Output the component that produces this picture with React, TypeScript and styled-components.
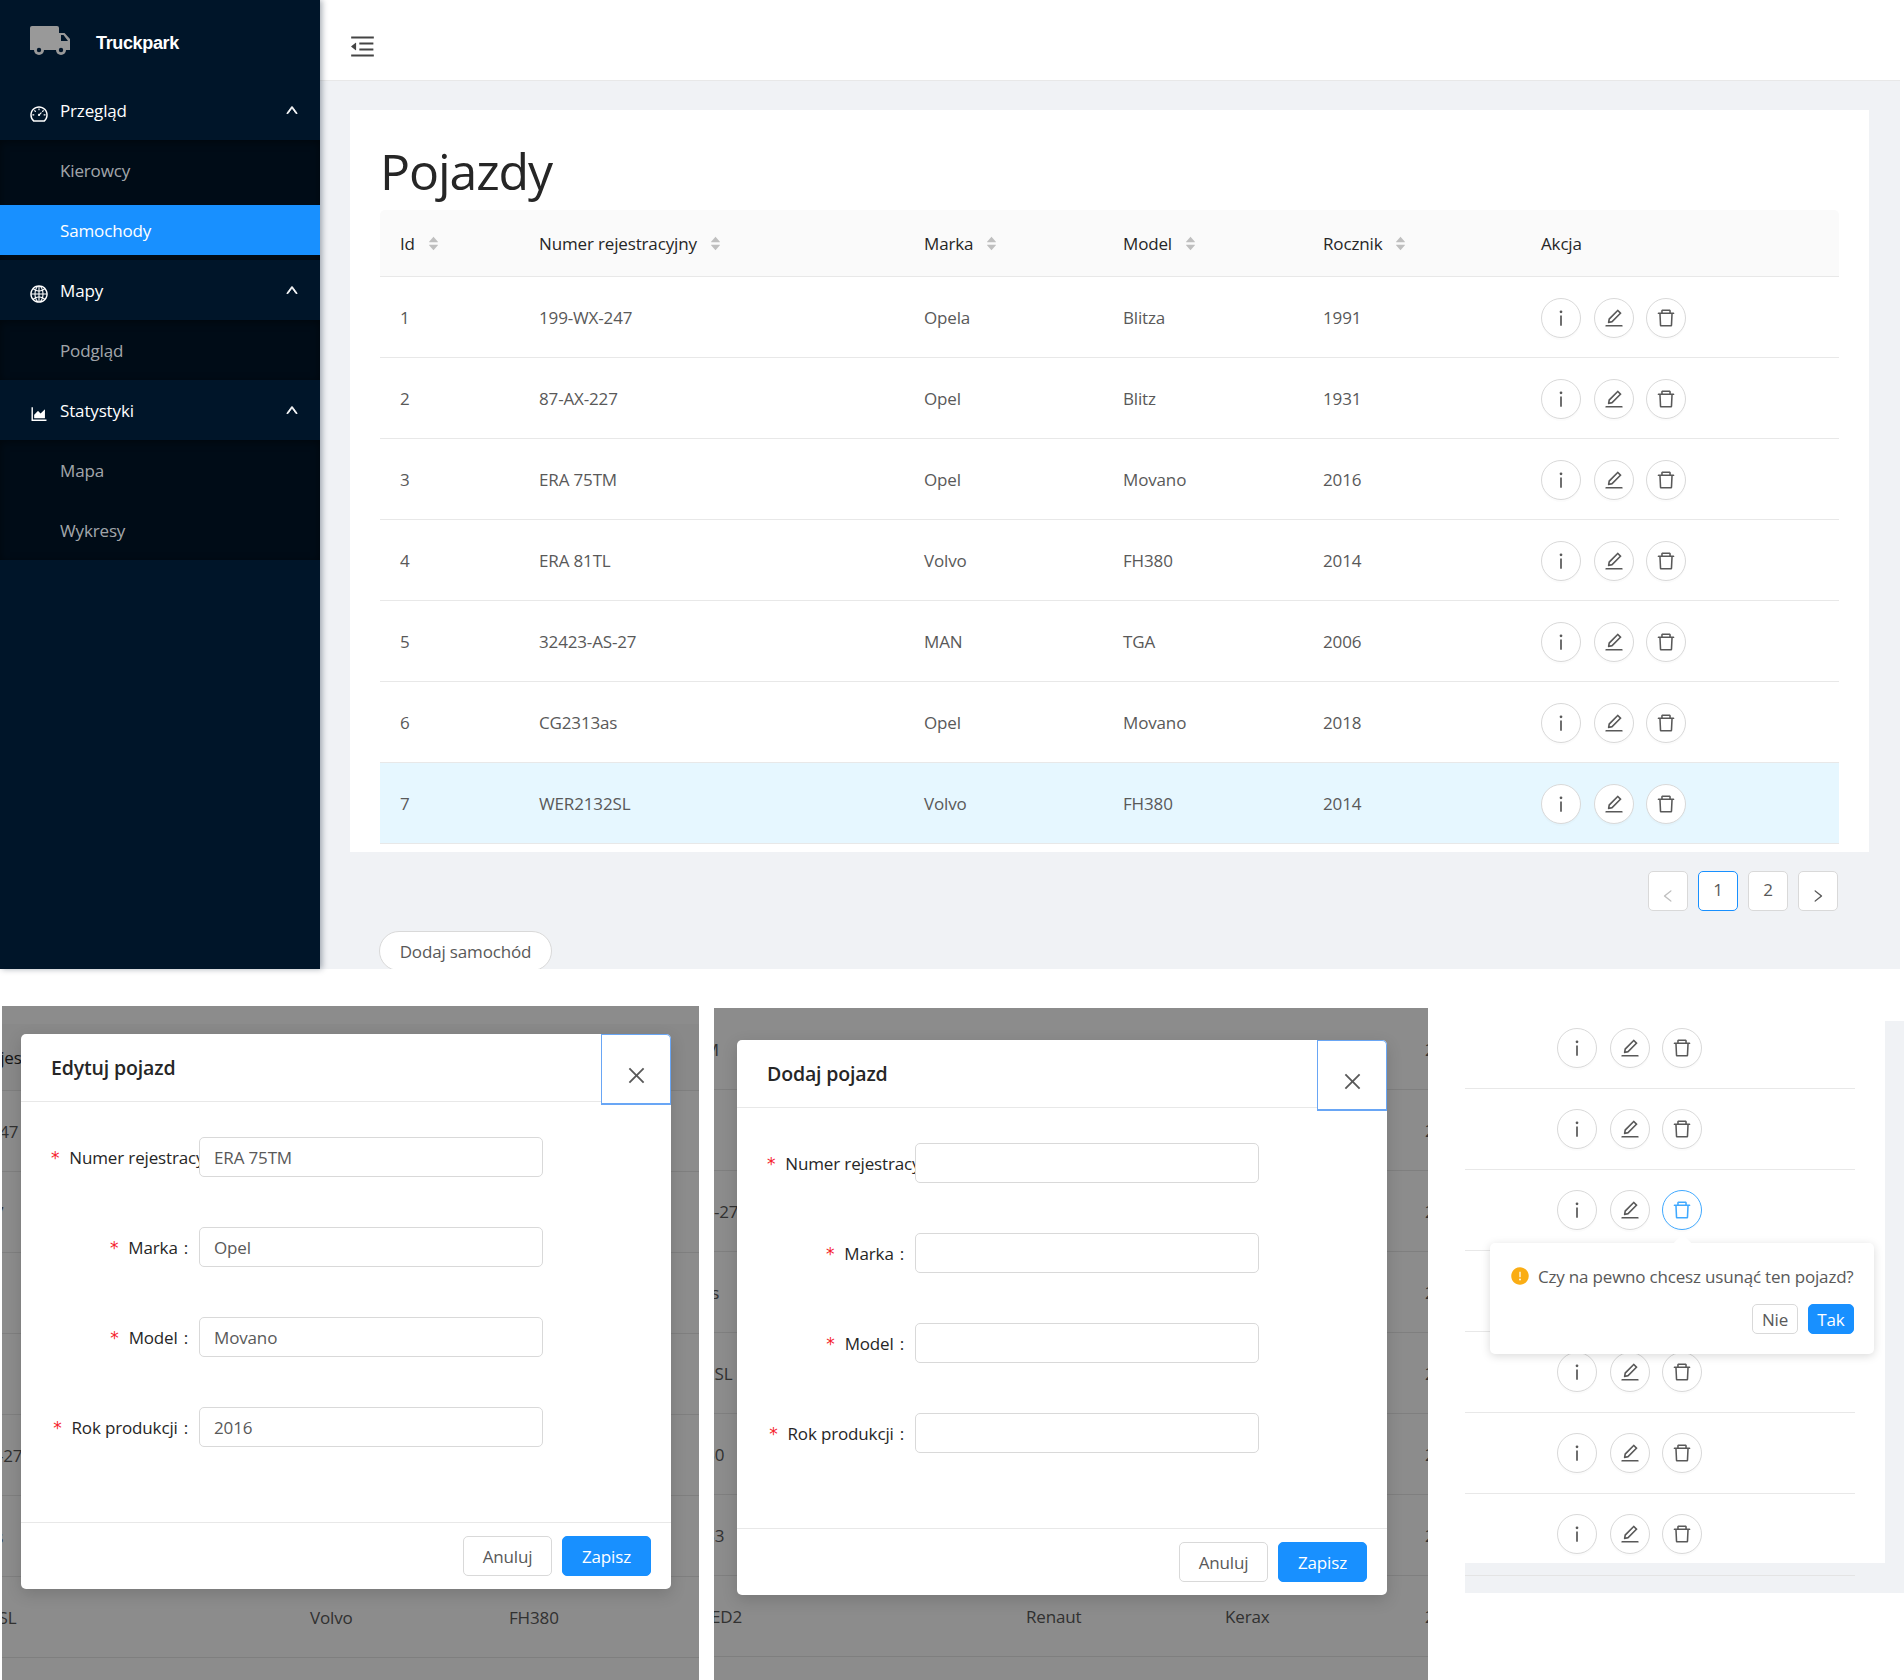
import React from 'react'
import styled, { createGlobalStyle } from 'styled-components'
import {
  AiOutlineDashboard,
  AiOutlineGlobal,
  AiOutlineAreaChart,
  AiOutlineUp,
  AiOutlineInfo,
  AiOutlineEdit,
  AiOutlineDelete,
  AiOutlineMenuFold,
  AiOutlineLeft,
  AiOutlineRight,
  AiOutlineClose,
  AiFillCaretUp,
  AiFillCaretDown,
  AiFillExclamationCircle,
} from 'react-icons/ai'

const FONT = '"Open Sans", "Noto Sans", sans-serif'
const COLUMNS = '139px 385px 199px 200px 218px 318px'

const GlobalStyle = createGlobalStyle`
  html, body {
    margin: 0;
    background: #fff;
  }
  body {
    font-family: ${FONT};
    font-size: 17px;
    color: #595959;
    letter-spacing: -0.15px;
  }
  * {
    box-sizing: border-box;
  }
`

const Page = styled.div`
  width: 1904px;
  height: 1680px;
  overflow: hidden;
`

const Shell = styled.div`
  display: flex;
  width: 1900px;
  height: 969px;
  background: #f0f2f5;
`

const Sidebar = styled.aside`
  flex: 0 0 320px;
  background: #001529;
  color: #fff;
  box-shadow: 2px 0 6px rgba(0, 21, 41, 0.35);
  z-index: 2;
`

const Brand = styled.div`
  display: flex;
  align-items: center;
  height: 80px;
  padding-left: 30px;
`

const BrandName = styled.span`
  margin-left: 26px;
  margin-top: 6px;
  font-family: "Liberation Sans", Arial, sans-serif;
  font-weight: 700;
  font-size: 18px;
  letter-spacing: -0.35px;
`

const MenuHead = styled.div`
  display: flex;
  align-items: center;
  height: 60px;
  padding: 0 20px 0 29px;
  svg.main {
    font-size: 20px;
    margin-top: 8px;
    margin-right: 11px;
  }
  svg.chevron {
    font-size: 14px;
    margin-left: auto;
    stroke-width: 60;
    margin-right: 1px;
  }
`

const SubMenu = styled.div`
  display: flex;
  flex-direction: column;
  gap: 10px;
  padding: 5px 0;
  background: #000c17;
  box-shadow: inset 0 2px 8px rgba(0, 0, 0, 0.45);
`

const SubItem = styled.div<{ $active?: boolean }>`
  display: flex;
  align-items: center;
  height: 50px;
  padding-left: 60px;
  color: ${p => (p.$active ? '#fff' : 'rgba(255, 255, 255, 0.65)')};
  background: ${p => (p.$active ? '#1890ff' : 'transparent')};
`

const Main = styled.main`
  flex: 1;
  min-width: 0;
  overflow: hidden;
`

const TopBar = styled.header`
  display: flex;
  align-items: center;
  height: 81px;
  padding: 13px 0 0 28px;
  background: #fff;
  border-bottom: 1px solid #e8e8e8;
  color: #444;
  font-size: 29px;
`

const Content = styled.div`
  padding: 29px 31px 0 30px;
`

const Card = styled.section`
  background: #fff;
  padding: 0 30px 8px;
`

const Title = styled.h1`
  margin: 0;
  height: 100px;
  padding-top: 27px;
  font-size: 50px;
  line-height: 68px;
  font-weight: 500;
  color: #262626;
  letter-spacing: -1.1px;
`

const Row = styled.div<{ $hot?: boolean }>`
  display: grid;
  grid-template-columns: ${COLUMNS};
  align-items: center;
  width: 1459px;
  height: 81px;
  padding-top: 2px;
  border-bottom: 1px solid #e8e8e8;
  background: ${p => (p.$hot ? '#e6f7ff' : 'transparent')};
`

const HeadRow = styled(Row)`
  height: 67px;
  background: #fafafa;
  color: #262626;
  border-radius: 5px 5px 0 0;
`

const Cell = styled.div`
  display: flex;
  align-items: center;
  padding: 0 0 2px 20px;
  white-space: nowrap;
`

const ActionCell = styled(Cell)`
  padding-bottom: 0;
`

const Sort = styled.span`
  display: inline-flex;
  flex-direction: column;
  margin-left: 12px;
  color: #bfbfbf;
  font-size: 13px;
  svg:last-child {
    margin-top: -5px;
  }
`

const Actions = styled.div`
  display: flex;
  gap: 13px;
`

const Round = styled.button<{ $focus?: boolean }>`
  display: flex;
  align-items: center;
  justify-content: center;
  width: 40px;
  height: 40px;
  padding: 0;
  border-radius: 50%;
  border: 1px solid ${p => (p.$focus ? '#40a9ff' : '#d9d9d9')};
  background: #fff;
  color: ${p => (p.$focus ? '#40a9ff' : '#595959')};
  font-size: 22px;
  box-shadow: 0 2px 0 rgba(0, 0, 0, 0.015);
  &:last-child {
    margin-left: -1px;
  }
`

const Below = styled.div`
  padding: 0 31px 0 29px;
`

const Pager = styled.nav`
  display: flex;
  justify-content: flex-end;
  gap: 10px;
  padding-top: 19px;
`

const PageBox = styled.span<{ $active?: boolean; $muted?: boolean }>`
  display: flex;
  align-items: center;
  justify-content: center;
  width: 40px;
  height: 40px;
  padding-bottom: 3px;
  background: #fff;
  border-radius: 5px;
  border: 1px solid ${p => (p.$active ? '#1890ff' : '#d9d9d9')};
  color: ${p => (p.$muted ? '#bfbfbf' : '#595959')};
  font-size: 17px;
  svg {
    font-size: 16px;
    margin-top: 12px;
  }
`

const AddButton = styled.button`
  display: block;
  height: 40px;
  width: 173px;
  margin-top: 20px;
  padding: 0;
  border: 1px solid #d9d9d9;
  border-radius: 20px;
  background: #fff;
  color: #595959;
  font: inherit;
  letter-spacing: inherit;
`

const Strip = styled.div`
  display: flex;
  align-items: flex-start;
`

const Shot = styled.div<{ $left: number; $top: number; $width: number }>`
  position: relative;
  flex: none;
  width: ${p => p.$width}px;
  height: ${p => 711 - p.$top}px;
  margin-left: ${p => p.$left}px;
  margin-top: ${p => p.$top}px;
  overflow: hidden;
  background: #fff;
`

const Backdrop = styled.div<{ $shift: number; $pad: number }>`
  margin-left: ${p => p.$shift}px;
  padding-top: ${p => p.$pad}px;
`

const Mask = styled.div`
  position: absolute;
  inset: 0;
  background: rgba(0, 0, 0, 0.45);
`

const Dialog = styled.div<{ $left: number; $top: number }>`
  position: absolute;
  left: ${p => p.$left}px;
  top: ${p => p.$top}px;
  width: 650px;
  height: 555px;
  display: flex;
  flex-direction: column;
  background: #fff;
  border-radius: 5px;
  box-shadow: 0 5px 16px rgba(0, 0, 0, 0.15);
`

const DialogHead = styled.div`
  display: flex;
  align-items: center;
  height: 68px;
  flex: none;
  padding-left: 30px;
  border-bottom: 1px solid #e8e8e8;
  font-size: 19.500px;
  font-weight: 600;
  color: #262626;
`

const Close = styled.button`
  position: absolute;
  right: 0;
  top: 0;
  display: flex;
  align-items: center;
  justify-content: center;
  width: 70px;
  height: 71px;
  padding: 12px 0 0;
  border: 1px solid #69a6f5;
  border-bottom-width: 2px;
  border-radius: 0 5px 0 0;
  background: #fff;
  color: #595959;
  font-size: 23px;
`

const DialogBody = styled.div`
  flex: 1;
  display: flex;
  flex-direction: column;
  gap: 50px;
  padding-top: 35px;
`

const FormRow = styled.div`
  display: flex;
  align-items: center;
  padding-left: 30px;
`

const Label = styled.label`
  flex: 0 0 148px;
  overflow: hidden;
  text-align: right;
  white-space: nowrap;
  color: #262626;
`

const Star = styled.span`
  margin-right: 10px;
  color: #f5222d;
  font-family: "DejaVu Sans", sans-serif;
  font-size: 17px;
`

const Colon = styled.span`
  margin: 0 11px 0 6px;
`

const Field = styled.input`
  width: 344px;
  height: 40px;
  padding: 0 14px;
  border: 1px solid #d9d9d9;
  border-radius: 5px;
  background: #fff;
  color: #595959;
  font: inherit;
  letter-spacing: inherit;
`

const DialogFoot = styled.div`
  flex: 0 0 67px;
  display: flex;
  align-items: center;
  justify-content: flex-end;
  gap: 10px;
  padding-right: 20px;
  border-top: 1px solid #e8e8e8;
`

const Btn = styled.button<{ $primary?: boolean; $small?: boolean }>`
  width: ${p => (p.$small ? 46 : 89)}px;
  height: ${p => (p.$small ? 30 : 40)}px;
  padding: 0;
  border-radius: 5px;
  border: 1px solid ${p => (p.$primary ? '#1890ff' : '#d9d9d9')};
  background: ${p => (p.$primary ? '#1890ff' : '#fff')};
  color: ${p => (p.$primary ? '#fff' : '#595959')};
  font: inherit;
  letter-spacing: inherit;
`

const ActionColumn = styled.div`
  flex: 0 0 420px;
`

const ActionRow = styled.div<{ $last?: boolean }>`
  display: flex;
  align-items: flex-start;
  width: 390px;
  height: ${p => (p.$last ? 69 : 81)}px;
  padding: 20px 0 0 92px;
  border-bottom: ${p => (p.$last ? 'none' : '1px solid #e8e8e8')};
`

const GrayFoot = styled.div`
  height: 30px;
  width: 420px;
  background: #f0f2f5;
  &::before {
    content: '';
    display: block;
    width: 390px;
    height: 12px;
    border-bottom: 1px solid #e4e4e4;
  }
`

const ActionShot = styled.div`
  display: flex;
  flex: none;
  position: relative;
  width: 439px;
  margin-left: 37px;
  margin-top: 39px;
`

const GrayEdge = styled.div`
  flex: 0 0 19px;
  height: 572px;
  margin-top: 13px;
  background: #f0f2f5;
`

const Popover = styled.div`
  position: absolute;
  left: 25px;
  top: 235px;
  width: 384px;
  height: 111px;
  padding: 19px 20px 0;
  background: #fff;
  border-radius: 5px;
  box-shadow: 0 2px 10px rgba(0, 0, 0, 0.15);
  &::before {
    content: '';
    position: absolute;
    left: 186px;
    top: -6px;
    width: 13px;
    height: 13px;
    background: #fff;
    transform: rotate(45deg);
  }
`

const PopText = styled.div`
  display: flex;
  align-items: center;
  gap: 8px;
  height: 28px;
  white-space: nowrap;
  letter-spacing: -0.19px;
  svg {
    flex: none;
    font-size: 20px;
    color: #faad14;
  }
`

const PopButtons = styled.div`
  display: flex;
  justify-content: flex-end;
  gap: 10px;
  margin-top: 14px;
`

const Truck = () => (
  <svg width="40" height="29" viewBox="0 0 40 29" fill="#999">
    <path d="M2 0h25a2 2 0 0 1 2 2v22H0V2a2 2 0 0 1 2-2z" />
    <path d="M29 7h5.500L40 13v11H29zM31 9v6h7l-4.500-6z" fillRule="evenodd" />
    <circle cx="9" cy="24" r="5" />
    <circle cx="9" cy="24" r="2.200" fill="#001529" />
    <circle cx="31" cy="24" r="5" />
    <circle cx="31" cy="24" r="2.200" fill="#001529" />
  </svg>
)

const vehicles = [
  ['1', '199-WX-247', 'Opela', 'Blitza', '1991'],
  ['2', '87-AX-227', 'Opel', 'Blitz', '1931'],
  ['3', 'ERA 75TM', 'Opel', 'Movano', '2016'],
  ['4', 'ERA 81TL', 'Volvo', 'FH380', '2014'],
  ['5', '32423-AS-27', 'MAN', 'TGA', '2006'],
  ['6', 'CG2313as', 'Opel', 'Movano', '2018'],
  ['7', 'WER2132SL', 'Volvo', 'FH380', '2014'],
]

const otherVehicles = [
  ['3', 'ERA 75TM', 'Opel', 'Movano', '2016'],
  ['8', 'AB-123', 'Opel', 'Blitz', '2011'],
  ['5', '32423-AS-27', 'MAN', 'TGA', '2006'],
  ['6', 'CG2313as', 'Opel', 'Movano', '2018'],
  ['7', 'WER2132SL', 'Volvo', 'FH380', '2014'],
  ['9', 'WWX 1230', 'Opel', 'Movano', '2015'],
  ['10', 'WWX 1233', 'MAN', 'TGA', '2012'],
  ['11', 'WPRA 45ED2', 'Renaut', 'Kerax', '2010'],
]

const headers = ['Id', 'Numer rejestracyjny', 'Marka', 'Model', 'Rocznik']

const ActionButtons = ({ focus }: { focus?: boolean }) => (
  <Actions>
    <Round><AiOutlineInfo /></Round>
    <Round><AiOutlineEdit /></Round>
    <Round $focus={focus}><AiOutlineDelete /></Round>
  </Actions>
)

const TableHead = () => (
  <HeadRow>
    {headers.map(h => (
      <Cell key={h}>
        {h}
        <Sort><AiFillCaretUp /><AiFillCaretDown /></Sort>
      </Cell>
    ))}
    <Cell>Akcja</Cell>
  </HeadRow>
)

const VehicleRow = ({ data, hot }: { data: string[]; hot?: boolean }) => (
  <Row $hot={hot}>
    {data.map((v, i) => <Cell key={i}>{v}</Cell>)}
    <ActionCell><ActionButtons /></ActionCell>
  </Row>
)

const VehicleDialog = ({ title, values, left, top }: { title: string; values: string[]; left: number; top: number }) => (
  <Dialog $left={left} $top={top}>
    <DialogHead>{title}</DialogHead>
    <Close><AiOutlineClose /></Close>
    <DialogBody>
      {['Numer rejestracyjny', 'Marka', 'Model', 'Rok produkcji'].map((name, i) => (
        <FormRow key={name}>
          <Label><Star>*</Star>{name}<Colon>:</Colon></Label>
          <Field readOnly value={values[i]} />
        </FormRow>
      ))}
    </DialogBody>
    <DialogFoot>
      <Btn>Anuluj</Btn>
      <Btn $primary>Zapisz</Btn>
    </DialogFoot>
  </Dialog>
)

const menu = [
  { name: 'Przegląd', Icon: AiOutlineDashboard, items: ['Kierowcy', 'Samochody'] },
  { name: 'Mapy', Icon: AiOutlineGlobal, items: ['Podgląd'] },
  { name: 'Statystyki', Icon: AiOutlineAreaChart, items: ['Mapa', 'Wykresy'] },
]

export default function App() {
  return (
    <Page>
      <GlobalStyle />
      <Shell>
        <Sidebar>
          <Brand>
            <Truck />
            <BrandName>Truckpark</BrandName>
          </Brand>
          {menu.map(({ name, Icon, items }) => (
            <div key={name}>
              <MenuHead>
                <Icon className="main" />
                {name}
                <AiOutlineUp className="chevron" />
              </MenuHead>
              <SubMenu>
                {items.map(item => (
                  <SubItem key={item} $active={item === 'Samochody'}>{item}</SubItem>
                ))}
              </SubMenu>
            </div>
          ))}
        </Sidebar>
        <Main>
          <TopBar><AiOutlineMenuFold /></TopBar>
          <Content>
            <Card>
              <Title>Pojazdy</Title>
              <TableHead />
              {vehicles.map((v, i) => <VehicleRow key={v[0]} data={v} hot={i === 6} />)}
            </Card>
            <Below>
              <Pager>
                <PageBox $muted><AiOutlineLeft /></PageBox>
                <PageBox $active>1</PageBox>
                <PageBox>2</PageBox>
                <PageBox><AiOutlineRight /></PageBox>
              </Pager>
              <AddButton>Dodaj samochód</AddButton>
            </Below>
          </Content>
        </Main>
      </Shell>
      <Strip>
        <Shot $left={2} $top={37} $width={697}>
          <Backdrop $shift={-236} $pad={18}>
            <TableHead />
            {vehicles.map(v => <VehicleRow key={v[0]} data={v} />)}
            <Row />
          </Backdrop>
          <Mask />
          <VehicleDialog title="Edytuj pojazd" values={['ERA 75TM', 'Opel', 'Movano', '2016']} left={19} top={28} />
        </Shot>
        <Shot $left={15} $top={39} $width={714}>
          <Backdrop $shift={-232} $pad={1}>
            {otherVehicles.map(v => <VehicleRow key={v[1]} data={v} />)}
          </Backdrop>
          <Mask />
          <VehicleDialog title="Dodaj pojazd" values={['', '', '', '']} left={23} top={32} />
        </Shot>
        <ActionShot>
          <ActionColumn>
            {[0, 1, 2, 3, 4, 5].map(i => (
              <ActionRow key={i}><ActionButtons focus={i === 2} /></ActionRow>
            ))}
            <ActionRow $last><ActionButtons /></ActionRow>
            <GrayFoot />
          </ActionColumn>
          <GrayEdge />
          <Popover>
            <PopText>
              <AiFillExclamationCircle />
              Czy na pewno chcesz usunąć ten pojazd?
            </PopText>
            <PopButtons>
              <Btn $small>Nie</Btn>
              <Btn $small $primary>Tak</Btn>
            </PopButtons>
          </Popover>
        </ActionShot>
      </Strip>
    </Page>
  )
}
